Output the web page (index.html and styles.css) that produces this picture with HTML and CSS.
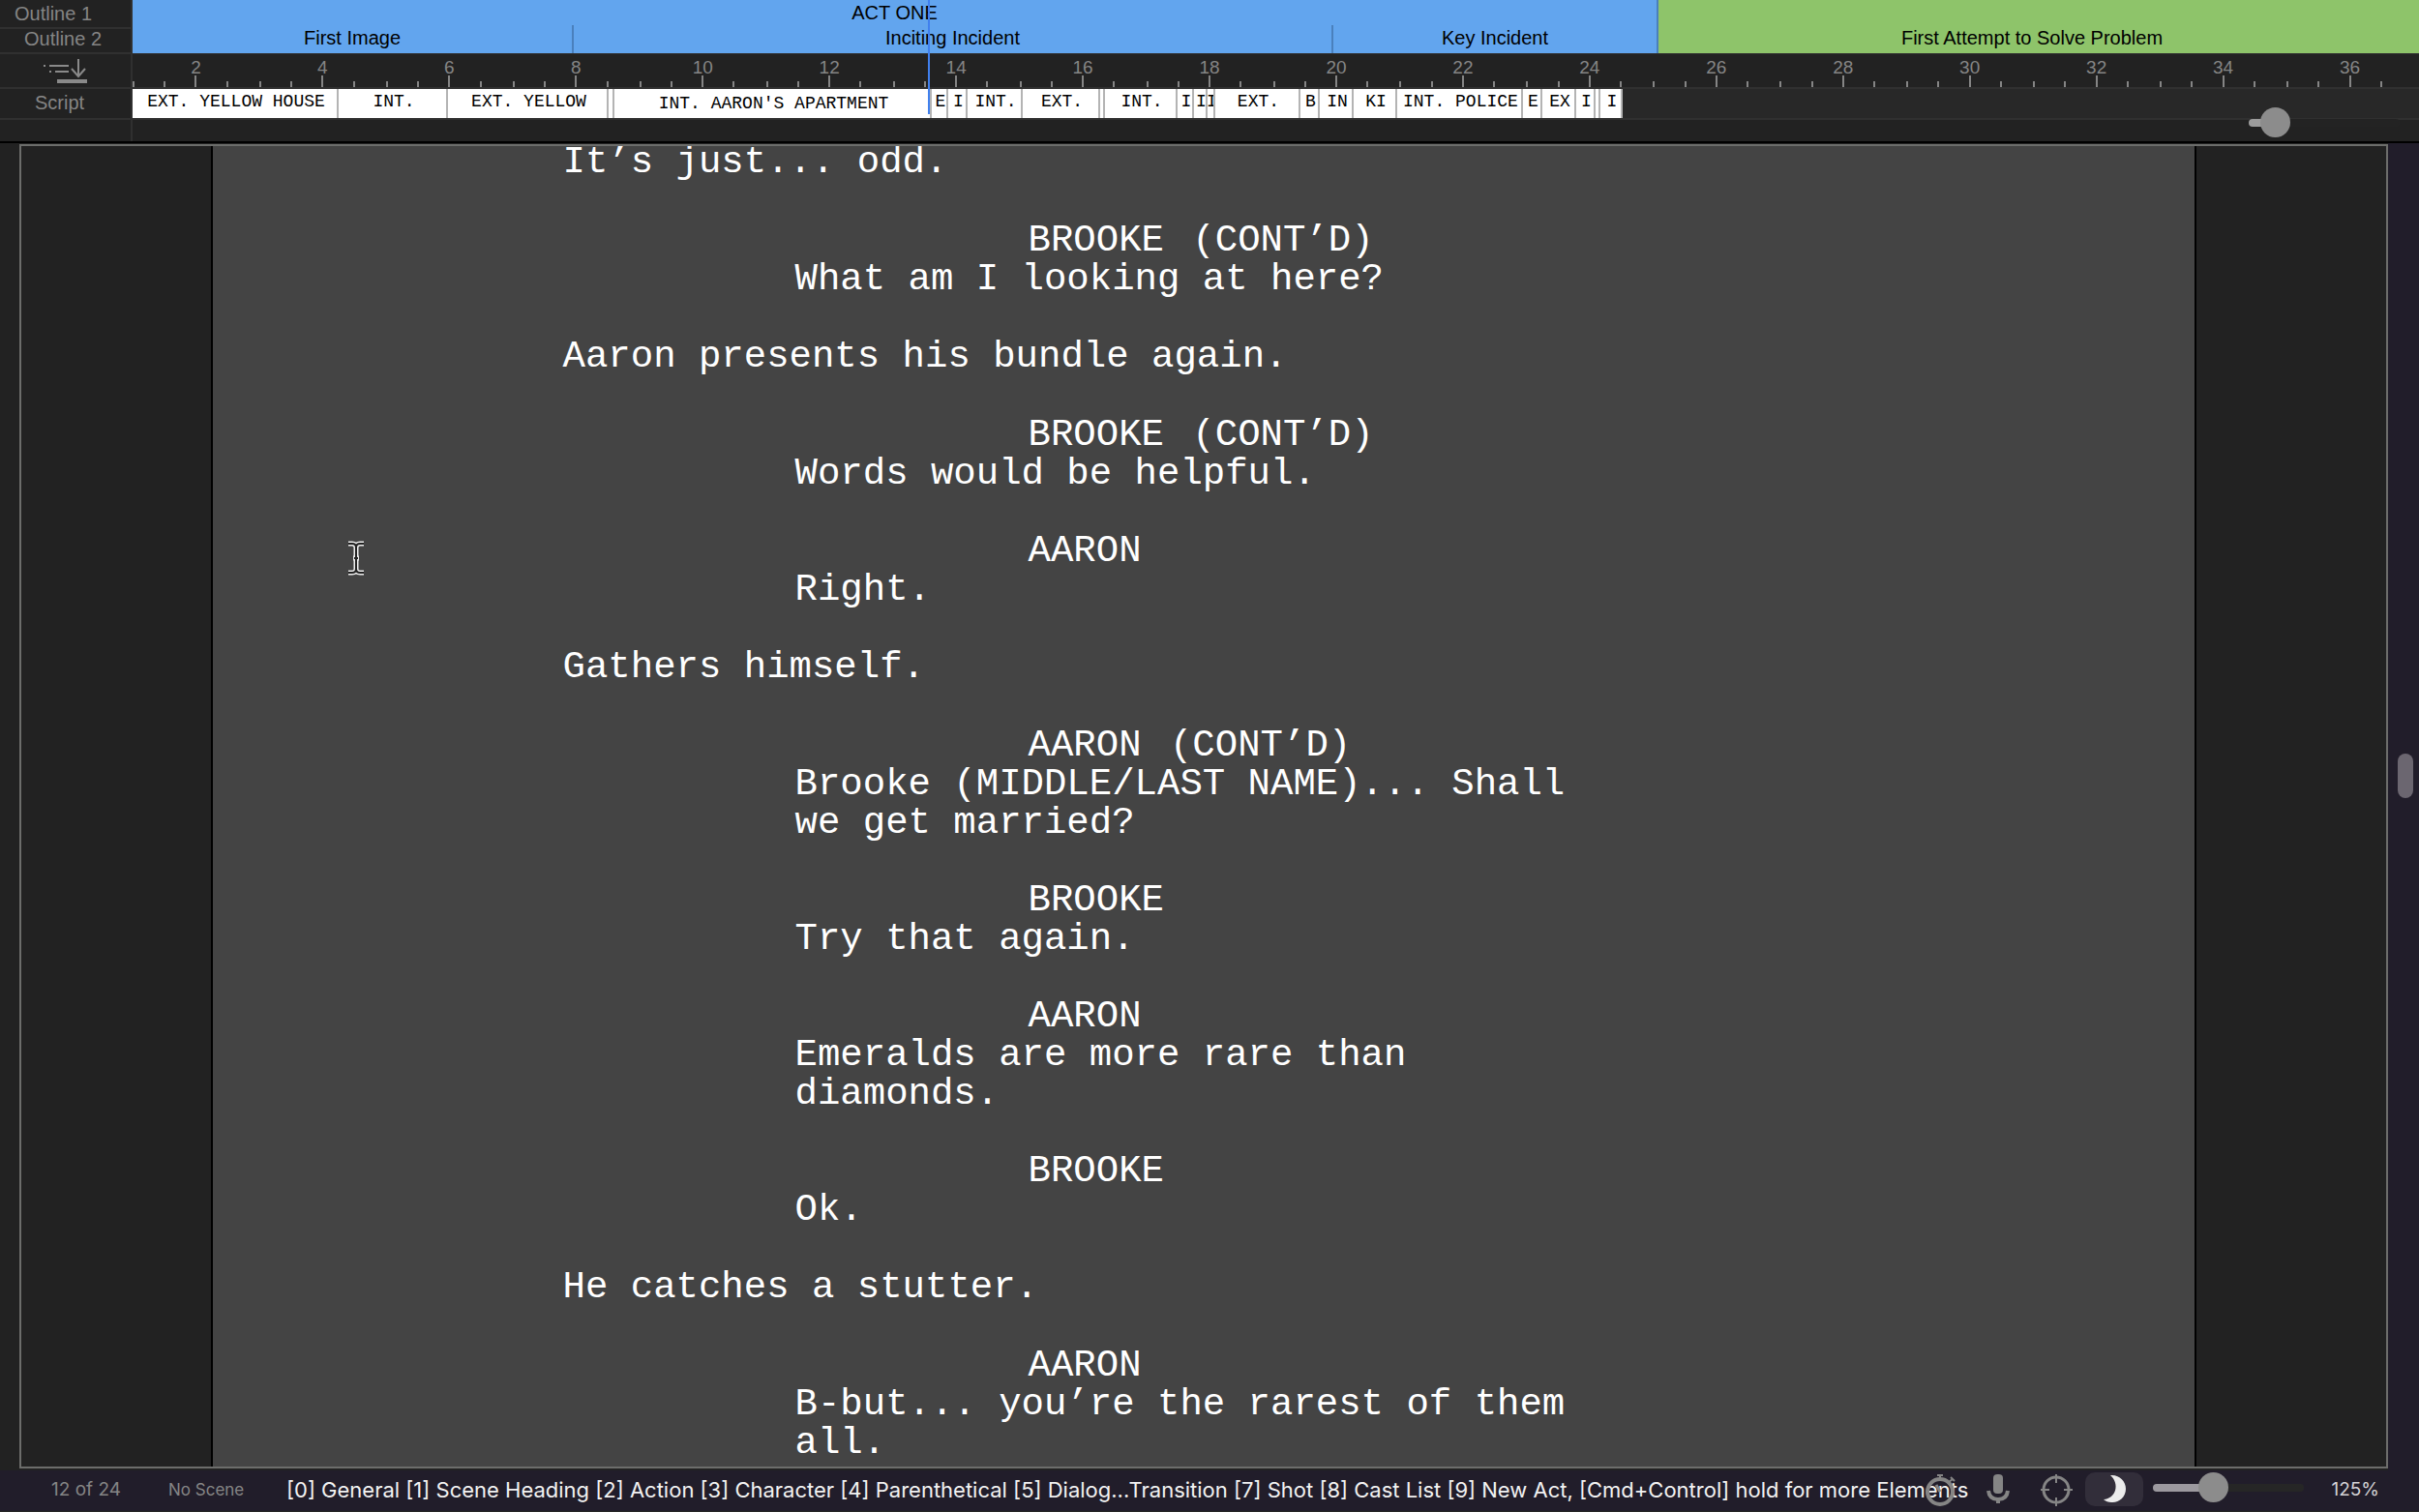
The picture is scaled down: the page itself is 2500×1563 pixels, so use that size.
FILE: index.html
```
<!DOCTYPE html>
<html lang="en">
<head>
	<meta charset="UTF-8">
	<title>Script</title>
	<link rel="stylesheet" href="styles.css">
</head>
<body>
	<header class="timeline">
		<div class="row outline">
			<div class="label level-1">Outline 1</div>
			<div class="track acts">
				<div class="beat blue">ACT ONE</div>
				<div class="beat green"></div>
			</div>
		</div>
		<div class="row outline">
			<div class="label level-2">Outline 2</div>
			<div class="track beats">
				<div class="beat blue">First Image</div>
				<div class="beat blue">Inciting Incident</div>
				<div class="beat blue">Key Incident</div>
				<div class="beat green">First Attempt to Solve Problem</div>
			</div>
		</div>
		<div class="row ruler">
			<div class="label">
				<button class="jump" aria-label="Jump to current scene">
					<svg width="46" height="26" viewBox="0 0 46 26" fill="none" stroke="#8a8a8a" stroke-width="2">
						<path d="M0 7h2M6 7h20M6 13h2M12 13h14"/>
						<path d="M36 0v18M29 10l7 8l7-8"/>
						<path d="M14 23h31" stroke-width="4"/>
					</svg>
				</button>
			</div>
			<div class="track pages">
				<span>2</span><span>4</span><span>6</span><span>8</span><span>10</span><span>12</span>
				<span>14</span><span>16</span><span>18</span><span>20</span><span>22</span><span>24</span>
				<span>26</span><span>28</span><span>30</span><span>32</span><span>34</span><span>36</span>
			</div>
		</div>
		<div class="row script">
			<div class="label level-3">Script</div>
			<div class="track" id="scenes"></div>
		</div>
		<div class="row zoom">
			<div class="label"></div>
			<div class="track">
				<input class="slider small" type="range" min="0" max="1000" value="97" aria-label="Timeline zoom">
			</div>
		</div>
		<div class="playhead-lane"><div class="playhead"></div></div>
	</header>

	<main class="workspace">
		<div class="editor">
			<article class="page">
				<p class="action">It’s just... odd.</p>
				<div class="speech">
					<h2>BROOKE <span>(CONT’D)</span></h2>
					<p>What am I looking at here?</p>
				</div>
				<p class="action">Aaron presents his bundle again.</p>
				<div class="speech">
					<h2>BROOKE <span>(CONT’D)</span></h2>
					<p>Words would be helpful.</p>
				</div>
				<div class="speech">
					<h2>AARON</h2>
					<p>Right.</p>
				</div>
				<p class="action">Gathers himself.</p>
				<div class="speech">
					<h2>AARON <span>(CONT’D)</span></h2>
					<p>Brooke (MIDDLE/LAST NAME)... Shall we get married?</p>
				</div>
				<div class="speech">
					<h2>BROOKE</h2>
					<p>Try that again.</p>
				</div>
				<div class="speech">
					<h2>AARON</h2>
					<p>Emeralds are more rare than diamonds.</p>
				</div>
				<div class="speech">
					<h2>BROOKE</h2>
					<p>Ok.</p>
				</div>
				<p class="action">He catches a stutter.</p>
				<div class="speech">
					<h2>AARON</h2>
					<p>B-but... you’re the rarest of them all.</p>
				</div>
				<svg class="cursor" width="20" height="36" viewBox="0 0 20 36" fill="none">
					<path d="M2 3h4q4 0 4 4q0-4 4-4h4M10 6v24M7 18h6M2 33h4q4 0 4-4q0 4 4 4h4" stroke="#eee" stroke-width="5"/>
					<path d="M2 3h4q4 0 4 4q0-4 4-4h4M10 6v24M8 18h4M2 33h4q4 0 4-4q0 4 4 4h4" stroke="#222" stroke-width="2"/>
				</svg>
			</article>
		</div>
		<div class="scrollbar"><div class="thumb"></div></div>
	</main>

	<footer class="status">
		<span class="count">12 of 24</span>
		<span class="scene">No Scene</span>
		<span class="hint">[0] General [1] Scene Heading [2] Action [3] Character [4] Parenthetical [5] Dialog...Transition [7] Shot [8] Cast List [9] New Act, [Cmd+Control] hold for more Elements</span>
		<div class="tools">
			<button aria-label="Sprint timer">
				<svg width="36" height="35" viewBox="0 0 36 35" fill="none" stroke="#858585">
					<circle cx="18" cy="20" r="13" stroke-width="4"/>
					<path d="M15 3h6M18 3v5M27 10l4-3M29 5l4 4" stroke-width="2"/>
					<path d="M14 13l4 7" stroke-width="3"/>
				</svg>
			</button>
			<button aria-label="Dictation">
				<svg width="36" height="35" viewBox="0 0 36 35">
					<rect x="13" y="2" width="10" height="20" rx="4" fill="#858585"/>
					<path d="M8 19q1 9 10 9t10-9M18 28v4" fill="none" stroke="#858585" stroke-width="4"/>
				</svg>
			</button>
			<button aria-label="Focus mode">
				<svg width="36" height="35" viewBox="0 0 36 35" fill="none" stroke="#858585">
					<circle cx="18" cy="18" r="13" stroke-width="3"/>
					<path d="M18 2v9M18 26v9M2 18h9M26 18h9" stroke-width="2"/>
				</svg>
			</button>
			<button class="on" aria-label="Night mode">
				<svg width="36" height="35" viewBox="0 0 36 35">
					<path d="M14 3c9-1 16 6 16 14c0 9-8 15-15 14c-3 0-6-1-8-3c13-1 17-16 7-25z" fill="#ececec"/>
				</svg>
			</button>
		</div>
		<input class="slider" type="range" min="0" max="1000" value="376" aria-label="Page zoom">
		<output class="percent">125%</output>
	</footer>
	<script type="text/javascript">
		// scene heading, length on the timeline
		var scenes=[
			['EXT. YELLOW HOUSE',213],['INT.',113],['EXT. YELLOW',166],['',6],
			['INT. AARON\'S APARTMENT',328,'current'],['E',17],['I',20],['INT.',57],['EXT.',80],
			['',5],['INT.',75],['I',17],['I',14],['I',8],['EXT.',88],['B',20],['IN',35],['KI',45],
			['INT. POLICE',130],['E',20],['EX',35],['I',20],['',5],['I',23]
		];
		var total=2363;
		var track=document.querySelector('#scenes');
		for (var i = 0; i < scenes.length; i++) {
			var div=document.createElement('div');
			div.className='scene-cell '+(scenes[i][2]||'');
			div.style.width=scenes[i][1]/total*100+'%';
			div.textContent=scenes[i][0];
			track.appendChild(div);
		}
	</script>
</body>
</html>
```
FILE: styles.css
```
*{
	margin:0;
	padding:0;
	box-sizing: border-box;
}
body{
	display: flex;
	flex-direction: column;
	height: 100vh;
	overflow: hidden;
	background: #222;
	color: #858585;
	font-family: "Liberation Sans", Arial, sans-serif;
}
button{
	border: 0;
	background: none;
}

/* timeline */
.timeline{
	position: relative;
	flex: none;
	font-size: 20px;
	border-bottom: 2px solid #000;
}
.row{
	display: grid;
	grid-template-columns: 137px 1fr;
	height: 26px;
}
.label{
	border-right: 2px solid #303030;
	border-bottom: 2px solid #303030;
	line-height: 28px;
}
.level-1{
	padding-left: 15px;
}
.level-2{
	padding-left: 25px;
}
.level-3{
	padding-left: 36px;
}
.track{
	min-width: 0;
	border-bottom: 2px solid #303030;
}
.outline .track{
	display: grid;
	border-bottom: 0;
	color: #000;
	text-align: center;
	white-space: nowrap;
}
.outline .acts{
	grid-template-columns: 1577fr 786fr;
	line-height: 26px;
}
.outline .beats{
	grid-template-columns: 456fr 785fr 336fr 786fr;
	line-height: 26px;
	border-bottom: 1px solid #303030;
}
.beat{
	min-width: 0;
}
.blue{
	background: #62a5ee;
	border-right: 2px solid #4a80bd;
}
.green{
	background: #8ec46a;
	padding-right: 14px;
}
.ruler{
	height: 40px;
}
.jump{
	display: block;
	margin: 9px 0 0 45px;
}
.pages{
	display: grid;
	grid-template-columns: repeat(18, 131fr) 6fr;
	font-size: 19px;
}
.pages span{
	text-align: center;
	line-height: 36px;
	background-image:
		linear-gradient(#858585,#858585),
		linear-gradient(#858585,#858585),
		linear-gradient(#858585,#858585),
		linear-gradient(#858585,#858585);
	background-repeat: no-repeat;
	background-size: 2px 6px, 2px 6px, 2px 12px, 2px 6px;
	background-position: 0 100%, 25% 100%, 50% 100%, 75% 100%;
}
.script{
	height: 26px;
}
#scenes{
	display: flex;
	background: #282828;
}
.scene-cell{
	flex: none;
	overflow: hidden;
	display: flex;
	justify-content: center;
	padding-left: 3px;
	background: #fff;
	border-right: 2px solid #b4b4b4;
	color: #000;
	font: 18px/26px "Liberation Mono", "Courier New", monospace;
	white-space: nowrap;
}
.current{
	line-height: 30px;
}
.zoom{
	height: 28px;
}
.zoom .label,
.zoom .track{
	border-bottom: 0;
}
.zoom .track{
	display: flex;
	justify-content: flex-end;
	align-items: flex-start;
	padding-right: 20px;
}
.playhead-lane{
	position: absolute;
	top: 0;
	right: 0;
	left: 137px;
	height: 118px;
	pointer-events: none;
}
.playhead{
	width: 2px;
	height: 100%;
	margin-left: 34.8%;
	background: #4080ee;
}

/* sliders */
.slider{
	appearance: none;
	flex: none;
	width: 156px;
	height: 31px;
	background: none;
}
.slider::-webkit-slider-runnable-track{
	height: 8px;
	border-radius: 4px;
	background: linear-gradient(90deg,#9c999f 40%,#262626 40%);
}
.slider::-webkit-slider-thumb{
	appearance: none;
	width: 31px;
	height: 31px;
	margin-top: -12px;
	border-radius: 50%;
	background: #8c8c8c;
}
.small{
	margin-top: -7px;
}
.small::-webkit-slider-runnable-track{
	background: linear-gradient(90deg,#9c9c9c 18%,#232323 18%);
}

/* script page */
.workspace{
	flex: 1;
	min-height: 0;
	display: flex;
	padding: 1px 0 2px 20px;
}
.editor{
	flex: 1;
	overflow: hidden;
	border: 2px solid #6c6d6b;
}
.page{
	display: flow-root;
	position: relative;
	width: 84%;
	height: 100%;
	margin: 0 auto;
	padding-left: 362px;
	background: #444;
	border: solid #000;
	border-width: 0 2px;
	color: #fff;
	font: 39px/40px "Liberation Mono", "Courier New", monospace;
}
.action{
	margin-top: 40px;
}
.page > .action:first-child{
	margin-top: -3px;
}
.speech{
	margin-top: 40px;
	padding-left: 240px;
}
.action + .speech{
	margin-top: 41px;
}
.speech h2{
	padding-left: 241px;
	font: inherit;
}
/* extensions sit a little apart from the name */
.speech h2 span{
	margin-left: 6px;
}
.speech p{
	max-width: 820px;
}
.cursor{
	position: absolute;
	left: 138px;
	top: 408px;
}
.scrollbar{
	display: flex;
	justify-content: center;
	align-items: flex-start;
	width: 32px;
	margin: -1px 0 -2px;
	padding-left: 4px;
	background: #211d2a;
}
.thumb{
	width: 16px;
	height: 46px;
	margin-top: 631px;
	border-radius: 8px;
	background: #6b6670;
}

/* status bar */
.status{
	flex: none;
	display: flex;
	align-items: flex-start;
	height: 43px;
	padding: 2px 41px 0 53px;
	background: #211d2a;
	border-bottom: 1px solid #262626;
	font: 19px/36px Inter, "Liberation Sans", sans-serif;
	white-space: nowrap;
}
.count{
	width: 121px;
}
.scene{
	width: 122px;
	font-size: 17px;
}
.hint{
	flex: 1;
	min-width: 0;
	color: #f2f2f2;
	font-size: 22px;
}
.tools{
	display: flex;
	margin-right: 10px;
}
.tools button{
	width: 60px;
	height: 35px;
	border-radius: 10px;
}
.tools svg{
	display: block;
	margin: 0 auto;
}
.tools .on{
	background: #322e3a;
}
.percent{
	width: 78px;
	text-align: right;
	color: #d5d3d6;
}
```
